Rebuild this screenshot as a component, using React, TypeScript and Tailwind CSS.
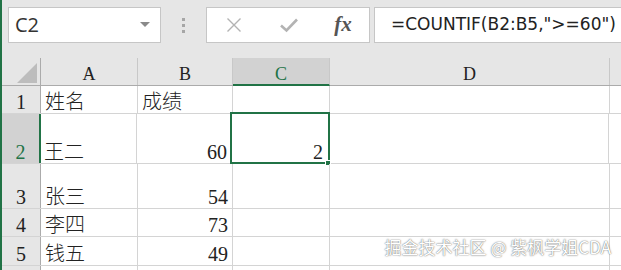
import React from "react";

const cellFont = { fontFamily: '"Liberation Serif", "Noto Sans CJK SC", serif' };

type Row = { n: string; h: string; a: string; b: string; c: string };

const rows: Row[] = [
  { n: "1", h: "h-[28px]", a: "姓名", b: "成绩", c: "" },
  { n: "2", h: "h-[50px]", a: "王二", b: "60", c: "2" },
  { n: "3", h: "h-[45px]", a: "张三", b: "54", c: "" },
  { n: "4", h: "h-[28px]", a: "李四", b: "73", c: "" },
  { n: "5", h: "h-[29px]", a: "钱五", b: "49", c: "" },
  { n: "", h: "h-[29px]", a: "", b: "", c: "" },
];

export default function App() {
  return (
    <div className="relative w-[621px] h-[270px] overflow-hidden bg-white border-l-2 border-[#217346]">
      {/* top bar */}
      <div className="h-[58px] bg-[#e6e6e6] flex items-start pt-[7px]">
        <div className="ml-[6px] w-[153px] h-[36px] bg-white border border-[#c6c6c6] flex items-center justify-between pl-[6px] pr-[10px]">
          <span className="text-[20px] text-[#333]" style={{ fontFamily: '"Open Sans", sans-serif' }}>C2</span>
          <svg width="10" height="6" viewBox="0 0 10 6"><path d="M0 0 L10 0 L5 5 Z" fill="#8a8a8a" /></svg>
        </div>
        <div className="w-[45px] h-[36px] flex flex-col items-center justify-center gap-[3px]">
          <div className="w-[3px] h-[3px] bg-[#a6a6a6]" />
          <div className="w-[3px] h-[3px] bg-[#a6a6a6]" />
          <div className="w-[3px] h-[3px] bg-[#a6a6a6]" />
        </div>
        <div className="w-[164px] h-[36px] bg-white border border-[#c6c6c6] flex items-center">
          <div className="w-[54px] flex justify-center">
            <svg width="16" height="16" viewBox="0 0 16 16"><path d="M1.5 1.5 L14.5 14.5 M14.5 1.5 L1.5 14.5" stroke="#b3b3b3" strokeWidth="1.4" /></svg>
          </div>
          <div className="w-[56px] flex justify-center">
            <svg width="20" height="16" viewBox="0 0 20 16"><path d="M2 8.5 L7.5 13.5 L18 2.5" stroke="#b3b3b3" strokeWidth="2.6" fill="none" /></svg>
          </div>
          <div className="w-[52px] flex justify-center">
            <span className="text-[21px] italic font-bold text-[#555]" style={{ fontFamily: '"Liberation Serif", serif' }}>fx</span>
          </div>
        </div>
        <div className="ml-[4px] flex-1 h-[36px] bg-white border border-[#c6c6c6] border-r-0 flex items-center pl-[16px]">
          <span className="text-[17px] text-[#222] whitespace-nowrap" style={{ fontFamily: '"DejaVu Sans", sans-serif' }}>=COUNTIF(B2:B5,"&gt;=60")</span>
        </div>
      </div>

      {/* column headers */}
      <div className="flex h-[28px] bg-[#e6e6e6] border-b border-[#ababab] text-[18px] leading-[18px] text-[#222]" style={cellFont}>
        <div className="w-[39px] border-r border-[#ababab] relative">
          <svg className="absolute left-[15px] top-[5px]" width="20" height="20" viewBox="0 0 20 20"><path d="M20 0 L20 20 L0 20 Z" fill="#bdbdbd" /></svg>
        </div>
        <div className="w-[97px] border-r border-[#c8c8c8] flex items-end justify-center pb-[2px]">A</div>
        <div className="w-[95px] border-r border-[#c8c8c8] flex items-end justify-center pb-[2px]">B</div>
        <div className="w-[97px] bg-[#d2d2d2] border-r border-[#c8c8c8] border-b-2 border-b-[#217346] flex items-end justify-center pb-[1px] text-[#217346] -mb-[1px]">C</div>
        <div className="w-[280px] border-r border-[#c8c8c8] flex items-end justify-center pb-[2px]">D</div>
        <div className="flex-1" />
      </div>

      {/* rows */}
      {rows.map((r, i) => {
        const sel = r.n === "2";
        return (
          <div key={i} className={`flex ${r.h} border-b border-[#d4d4d4] text-[20px] leading-[20px] text-[#222]`} style={cellFont}>
            <div
              className={`w-[39px] flex items-end justify-center pb-[1px] ${
                sel ? "bg-[#d2d2d2] text-[#217346] border-r-2 border-[#217346] -mr-[1px]" : "bg-[#e6e6e6] border-r border-[#ababab]"
              }`}
            >
              {r.n}
            </div>
            <div className="w-[97px] border-r border-[#d4d4d4] flex items-end pl-[4px] pb-[1px] font-light">{r.a}</div>
            <div className="w-[95px] border-r border-[#d4d4d4] flex items-end justify-between px-[4px] pb-[1px] font-light">
              {r.b && /\d/.test(r.b) ? <><span /><span>{r.b}</span></> : <span>{r.b}</span>}
            </div>
            <div className="w-[97px] border-r border-[#d4d4d4] flex items-end justify-end pr-[5px] pb-[1px] relative">
              {r.c}
              {sel && (
                <>
                  <div className="absolute -left-[2px] -top-[2px] w-[100px] h-[52px] border-2 border-[#217346]" />
                  <div className="absolute -right-[3px] -bottom-[3px] w-[6px] h-[6px] bg-[#217346] border border-white" />
                </>
              )}
            </div>
            <div className="w-[280px] border-r border-[#d4d4d4]" />
            <div className="flex-1" />
          </div>
        );
      })}

      <div
        className="absolute right-[10px] bottom-[13px] text-[17px] leading-[20px] text-white whitespace-nowrap"
        style={{
          fontFamily: '"Noto Sans CJK SC", sans-serif',
          textShadow: "0 0 1px rgba(0,0,0,0.55), 0 0 2px rgba(0,0,0,0.35)",
        }}
      >
        掘金技术社区 @ 紫枫学姐CDA
      </div>
    </div>
  );
}
